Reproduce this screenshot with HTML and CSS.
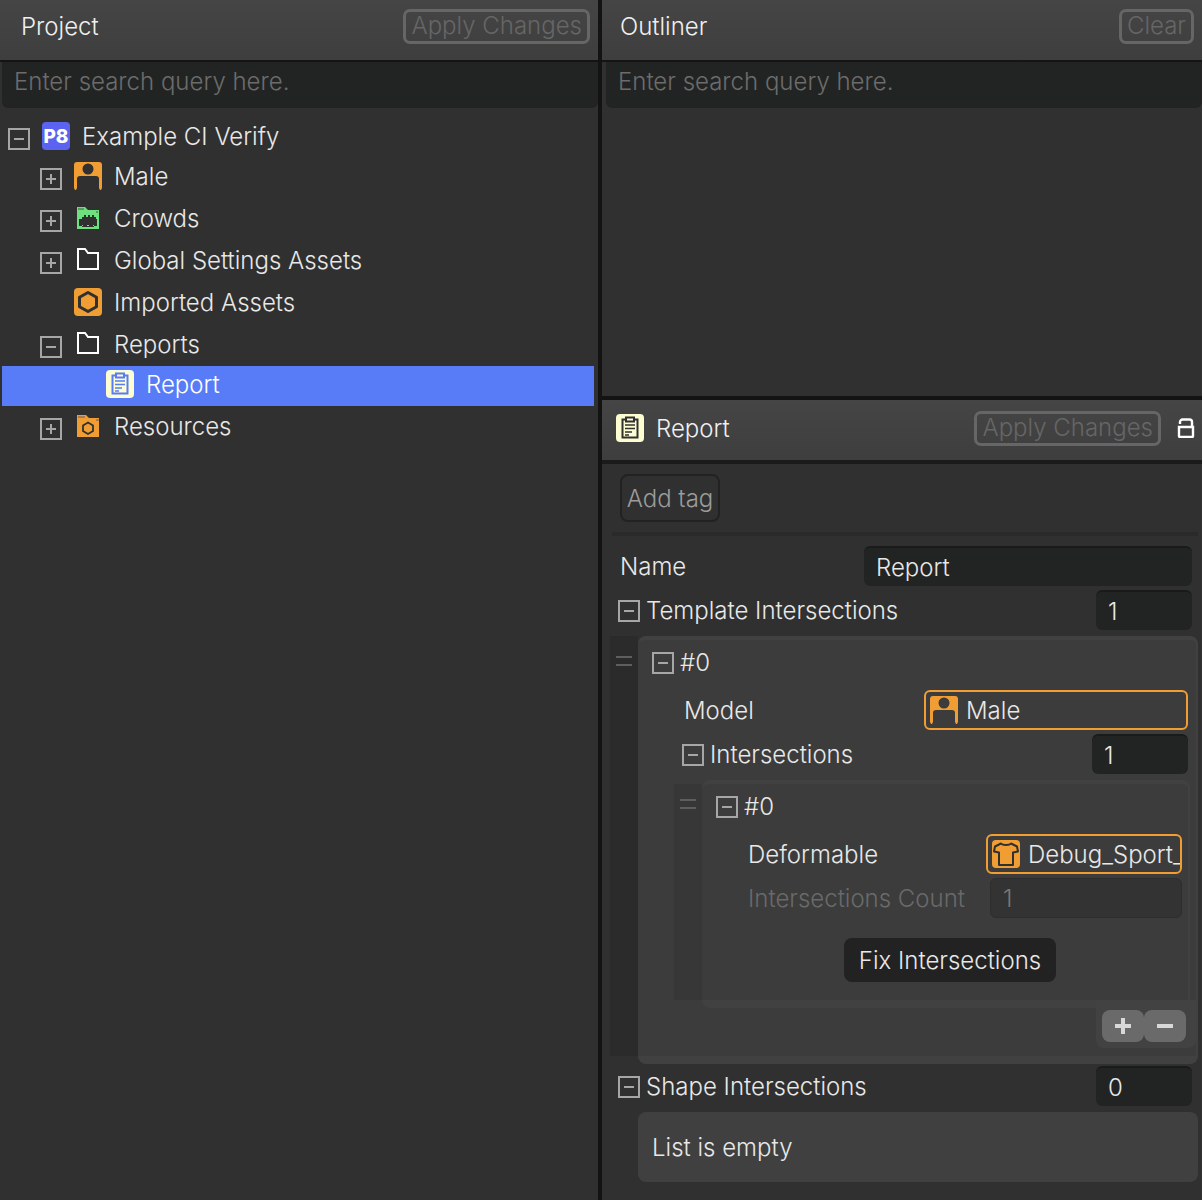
FILE: index.html
```html
<!DOCTYPE html>
<html>
<head>
    <title>Project</title>
    <link rel="stylesheet" href="styles.css">
</head>
<body>
    <!-- shared icons -->
    <svg class="defs" width="0" height="0">
        <symbol id="i-person" viewBox="0 0 28 28">
            <path fill="#f09e33" fill-rule="evenodd" d="M3 0h22a3 3 0 0 1 3 3v23l-1 2h-1l-1-2v-9a3 3 0 0 0-3-3H6a3 3 0 0 0-3 3v9l-1 2H1l-1-2V3a3 3 0 0 1 3-3zM14 1.500a5.500 5.500 0 1 0 0 11 5.500 5.500 0 0 0 0-11z"/>
        </symbol>
        <symbol id="i-folder" viewBox="0 0 28 28">
            <path fill="none" stroke="#fff" stroke-width="2" d="M4 3h7l3 4h10v16H4z"/>
        </symbol>
        <symbol id="i-crowd" viewBox="0 0 28 28">
            <path fill="#6fe07f" d="M3 3h8l3 3h11v19H3z"/>
            <path fill="#5a9a60" d="M4 4h6v2H4zM22 7h2v2h-2z"/>
            <path fill="#303030" d="M5 15h3v-2h2v-2h2v2h2v-2h2v2h2v-2h2v2h2v2h1v7H20v1H8v-1H5z"/>
            <path fill="#6fe07f" d="M8 21h1v1H8zM13 21h2v1h-2zM19 21h1v1h-1z"/>
        </symbol>
        <symbol id="i-box" viewBox="0 0 28 28">
            <rect width="28" height="28" rx="4" fill="#f09e33"/>
            <path fill="none" stroke="#303030" stroke-width="3" stroke-linejoin="round" d="M14 4.500l8.500 4.800v9.400L14 23.500l-8.500-4.800V9.300z"/>
        </symbol>
        <symbol id="i-resource" viewBox="0 0 28 28">
            <path fill="#f09e33" d="M3 3h9l3 3h10v19H3z"/>
            <path fill="#a87c50" d="M4 4h7v2H4zM22 7h3v2h-3z"/>
            <path fill="none" stroke="#303030" stroke-width="1.800" d="M14 10.500l5 2.900v5.700l-5 2.900-5-2.900v-5.700z"/>
        </symbol>
        <symbol id="i-report" viewBox="0 0 28 28">
            <rect width="28" height="28" rx="4" fill="#fdfdd2"/>
            <g fill="none" stroke="currentColor" stroke-width="2">
                <path d="M10 5.500H6.500v18h15v-18H18"/>
                <path d="M10 3.500h8v4h-8z"/>
                <path d="M9 11h10M9 14.500h10M9 18h7M9 21h4" stroke-width="1.600"/>
            </g>
        </symbol>
        <symbol id="i-shirt" viewBox="0 0 28 28">
            <rect width="28" height="28" rx="4" fill="#f09e33"/>
            <path fill="none" stroke="#303030" stroke-width="2" stroke-linejoin="round" d="M9 3.500c1.500 2 8.500 2 10 0l6 3 1 5-5 1V25H7V12.500l-5-1 1-5z"/>
        </symbol>
    </svg>

    <div class="app">
        <div class="pane pane-left">
            <div class="header">
                <span class="title">Project</span>
                <button class="apply">Apply Changes</button>
            </div>
            <div class="search">Enter search query here.</div>
            <div class="tree">
                <div class="row">
                    <span class="toggle open"></span>
                    <svg class="icon" viewBox="0 0 28 28"><rect width="28" height="28" rx="4" fill="#5a64f0"/><text x="14" y="21" text-anchor="middle" class="p8">P8</text></svg>
                    <span class="label">Example CI Verify</span>
                </div>
                <div class="row d1 gap">
                    <span class="toggle"></span>
                    <svg class="icon"><use href="#i-person"/></svg>
                    <span class="label">Male</span>
                </div>
                <div class="row d1 gap">
                    <span class="toggle"></span>
                    <svg class="icon"><use href="#i-crowd"/></svg>
                    <span class="label">Crowds</span>
                </div>
                <div class="row d1 gap">
                    <span class="toggle"></span>
                    <svg class="icon"><use href="#i-folder"/></svg>
                    <span class="label">Global Settings Assets</span>
                </div>
                <div class="row d1 gap">
                    <span class="toggle blank"></span>
                    <svg class="icon"><use href="#i-box"/></svg>
                    <span class="label">Imported Assets</span>
                </div>
                <div class="row d1">
                    <span class="toggle open"></span>
                    <svg class="icon"><use href="#i-folder"/></svg>
                    <span class="label">Reports</span>
                </div>
                <div class="row d2 gap selected">
                    <span class="toggle blank"></span>
                    <svg class="icon"><use href="#i-report"/></svg>
                    <span class="label">Report</span>
                </div>
                <div class="row d1">
                    <span class="toggle"></span>
                    <svg class="icon"><use href="#i-resource"/></svg>
                    <span class="label">Resources</span>
                </div>
            </div>
        </div>

        <div class="pane pane-right">
            <div class="outliner">
                <div class="header">
                    <span class="title">Outliner</span>
                    <button class="apply">Clear</button>
                </div>
                <div class="search search-right">Enter search query here.</div>
            </div>

            <div class="header inspector-head">
                <svg class="icon report-dark"><use href="#i-report"/></svg>
                <span class="title">Report</span>
                <button class="apply">Apply Changes</button>
                <svg class="lock" viewBox="0 0 18 20"><path fill="none" stroke="#fff" stroke-width="2.400" d="M3 6V4a2.500 2.500 0 0 1 2.500-2.500h7A2.500 2.500 0 0 1 15 4v5M2 9h14a1 1 0 0 1 0 0v9a1 1 0 0 1-1 1H3a1 1 0 0 1-1-1z"/></svg>
            </div>

            <div class="inspector">
                <button class="tag">Add tag</button>
                <div class="sep"></div>

                <div class="prop prop-name">
                    <span class="prop-label">Name</span>
                    <div class="input input-name">Report</div>
                </div>
                <div class="prop prop-count">
                    <span class="toggle open"></span>
                    <span class="prop-label">Template Intersections</span>
                    <div class="input input-num">1</div>
                </div>

                <div class="list">
                    <div class="handle"><i></i><i></i></div>
                    <div class="items">
                        <div class="prop item-head">
                            <span class="toggle open"></span>
                            <span class="prop-label">#0</span>
                        </div>
                        <div class="prop model-row">
                            <span class="prop-label">Model</span>
                            <div class="picker picker-model">
                                <svg class="icon"><use href="#i-person"/></svg>
                                <span>Male</span>
                            </div>
                        </div>
                        <div class="prop inner-count">
                            <span class="toggle open"></span>
                            <span class="prop-label">Intersections</span>
                            <div class="input input-num">1</div>
                        </div>

                        <div class="list list-nested">
                            <div class="handle"><i></i><i></i></div>
                            <div class="items">
                                <div class="prop item-head">
                                    <span class="toggle open"></span>
                                    <span class="prop-label">#0</span>
                                </div>
                                <div class="prop model-row">
                                    <span class="prop-label">Deformable</span>
                                    <div class="picker picker-deform">
                                        <svg class="icon"><use href="#i-shirt"/></svg>
                                        <span>Debug_Sport_Shirt</span>
                                    </div>
                                </div>
                                <div class="prop disabled-row">
                                    <span class="prop-label">Intersections Count</span>
                                    <div class="input input-disabled">1</div>
                                </div>
                                <button class="fix">Fix Intersections</button>
                            </div>
                        </div>

                        <div class="add-remove">
                            <button class="mini"><span class="plus"></span></button>
                            <button class="mini"><span class="minus"></span></button>
                        </div>
                    </div>
                </div>

                <div class="prop prop-shape">
                    <span class="toggle open"></span>
                    <span class="prop-label">Shape Intersections</span>
                    <div class="input input-num">0</div>
                </div>
                <div class="empty">List is empty</div>
            </div>
        </div>
    </div>
</body>
</html>
```

FILE: styles.css
```css
* {
    box-sizing: border-box;
}

html,
body {
    margin: 0;
    height: 1200px;
    overflow: hidden;
}

body {
    background: #303030;
    color: #e8e8e8;
    font-family: Inter, "Noto Sans", sans-serif;
    font-size: 24px;
    font-weight: 300;
}

button {
    font: inherit;
}

.defs {
    position: absolute;
}

.app {
    display: flex;
    height: 1200px;
}

.pane {
    background: #303030;
}

.pane-left {
    width: 598px;
}

.pane-right {
    width: 604px;
    padding-left: 4px;
    background: #303030;
    border-left: 4px solid #131313;
    padding-left: 0;
}

/* HEADERS */
.header {
    display: flex;
    align-items: center;
    height: 62px;
    padding: 0 8px 8px 21px;
    background: linear-gradient(#454545, #3e3e3e);
    border-bottom: 2px solid #141414;
}

.title {
    flex: 1;
    color: #f0f0f0;
}

.apply {
    height: 35px;
    padding: 0 5px;
    background: none;
    border: 3px solid #666;
    border-radius: 7px;
    color: #666;
    line-height: 26px;
}

.search {
    height: 46px;
    margin-left: 2px;
    padding: 5px 0 0 12px;
    background: #222423;
    border-radius: 0 0 6px 6px;
    color: #6c6c6c;
}

.search-right {
    margin-left: 4px;
}

/* TREE */
.tree {
    margin: 10px 4px 0 2px;
}

.row {
    display: flex;
    align-items: center;
    gap: 12px;
    height: 40px;
    padding-left: 6px;
}

.row.gap {
    margin-bottom: 2px;
}

.row.d1 {
    padding-left: 38px;
}

.row.d2 {
    padding-left: 70px;
}

.row.selected {
    background: #587cf7;
    color: #fff;
}

.row .icon {
    margin-bottom: 4px;
}

.row .label {
    padding-bottom: 4px;
}

.selected .icon {
    color: #587cf7;
}

.icon {
    flex: none;
    width: 28px;
    height: 28px;
}

.p8 {
    fill: #fff;
    font-size: 19px;
    font-weight: 800;
}

.toggle {
    position: relative;
    flex: none;
    width: 22px;
    height: 22px;
    margin-top: 2px;
    border: 2px solid #a6a6a6;
}

.toggle::before,
.toggle::after {
    content: '';
    position: absolute;
    background: #a6a6a6;
}

.toggle::before {
    left: 4px;
    top: 8px;
    width: 10px;
    height: 2px;
}

.toggle::after {
    left: 8px;
    top: 4px;
    width: 2px;
    height: 10px;
}

.toggle.open::after {
    display: none;
}

.toggle.blank {
    visibility: hidden;
}

/* RIGHT SIDE */
.outliner {
    height: 396px;
}

.outliner .header {
    padding-left: 18px;
}

.inspector-head {
    height: 68px;
    padding: 0 7px 4px 14px;
    border-top: 4px solid #131313;
    border-bottom: 4px solid #1b1b1b;
    margin-top: 0;
    gap: 12px;
}

.report-dark {
    color: #303030;
}

.inspector-head .apply {
    margin-right: 4px;
}

.lock {
    flex: none;
    width: 18px;
    height: 20px;
}

.inspector {
    padding: 10px 0 0 2px;
    width: 596px;
    margin-left: 4px;
    padding-left: 0;
}

.tag {
    display: block;
    width: 100px;
    height: 48px;
    margin-left: 14px;
    padding: 0;
    background: none;
    border: 2px solid #222;
    border-radius: 8px;
    color: #9c9c9c;
}

.sep {
    height: 4px;
    margin: 10px 4px 0 6px;
    background: #2a2a2a;
}

.prop {
    display: flex;
    align-items: center;
    gap: 6px;
    height: 40px;
}

.prop-label {
    flex: 1;
}

.input {
    display: flex;
    align-items: center;
    height: 40px;
    padding: 0 12px;
    background: #222423;
    border-top: 2px solid #1a1a1a;
    border-radius: 6px;
    color: #e8e8e8;
}

.input-num {
    width: 96px;
    padding-left: 12px;
}

.input-name {
    width: 328px;
}

.input-disabled {
    width: 192px;
    background: #333;
    border: 1px solid #2d2d2d;
    color: #777;
}

.prop-name {
    margin: 10px 10px 0 14px;
}

.prop-count {
    margin: 4px 10px 0 12px;
}

.prop-shape {
    margin: 2px 10px 0 12px;
}

/* LISTS */
.list {
    display: flex;
    margin: 6px 4px 0 4px;
}

.handle {
    flex: none;
    width: 28px;
    margin-bottom: 8px;
    padding: 20px 6px 0;
    background: #2b2b2b;
}

.handle i {
    display: block;
    height: 2px;
    margin-bottom: 6px;
    background: #5e5e5e;
}

.items {
    flex: 1;
    min-width: 0;
    background: #3c3c3c;
    border: solid #414141;
    border-width: 4px 2px 8px 0;
    border-radius: 8px;
    padding: 2px 8px 8px 0;
}

.item-head {
    margin-left: 14px;
}

.model-row {
    margin: 8px 0 0 46px;
}

.inner-count {
    margin: 4px 0 0 44px;
}

.picker {
    display: flex;
    align-items: center;
    gap: 8px;
    height: 40px;
    padding-left: 4px;
    border: 2px solid #f09e33;
    border-radius: 6px;
    overflow: hidden;
    white-space: nowrap;
}

.picker-model {
    width: 264px;
}

.picker-deform {
    width: 196px;
}

.list-nested {
    margin: 6px -2px 0 36px;
}

.list-nested .handle {
    margin-top: 4px;
    padding-top: 15px;
    background: #373737;
}

.list-nested .items {
    padding: 2px 6px 18px 0;
}

.disabled-row {
    margin: 4px 0 0 46px;
    color: #6a6a6a;
}

.fix {
    display: block;
    width: 212px;
    height: 44px;
    margin: 20px 0 0 142px;
    padding: 0;
    background: #222;
    border: 0;
    border-radius: 8px;
    color: #e8e8e8;
}

.add-remove {
    display: flex;
    width: 100px;
    margin: -8px -8px 0 auto;
    padding: 10px 10px 6px 6px;
    background: #424242;
    border-radius: 0 0 8px 8px;
    position: relative;
}

.mini {
    display: flex;
    align-items: center;
    justify-content: center;
    width: 42px;
    height: 32px;
    padding: 0;
    background: #6a6a6a;
    border: 0;
    border-radius: 8px;
}

.plus,
.minus {
    position: relative;
    display: block;
    width: 16px;
    height: 4px;
    background: #d8d8d8;
}

.plus::after {
    content: '';
    position: absolute;
    left: 6px;
    top: -6px;
    width: 4px;
    height: 16px;
    background: #d8d8d8;
}

.empty {
    display: flex;
    align-items: center;
    height: 70px;
    margin: 6px 4px 0 32px;
    padding-left: 14px;
    background: #404040;
    border-radius: 8px;
}
```
